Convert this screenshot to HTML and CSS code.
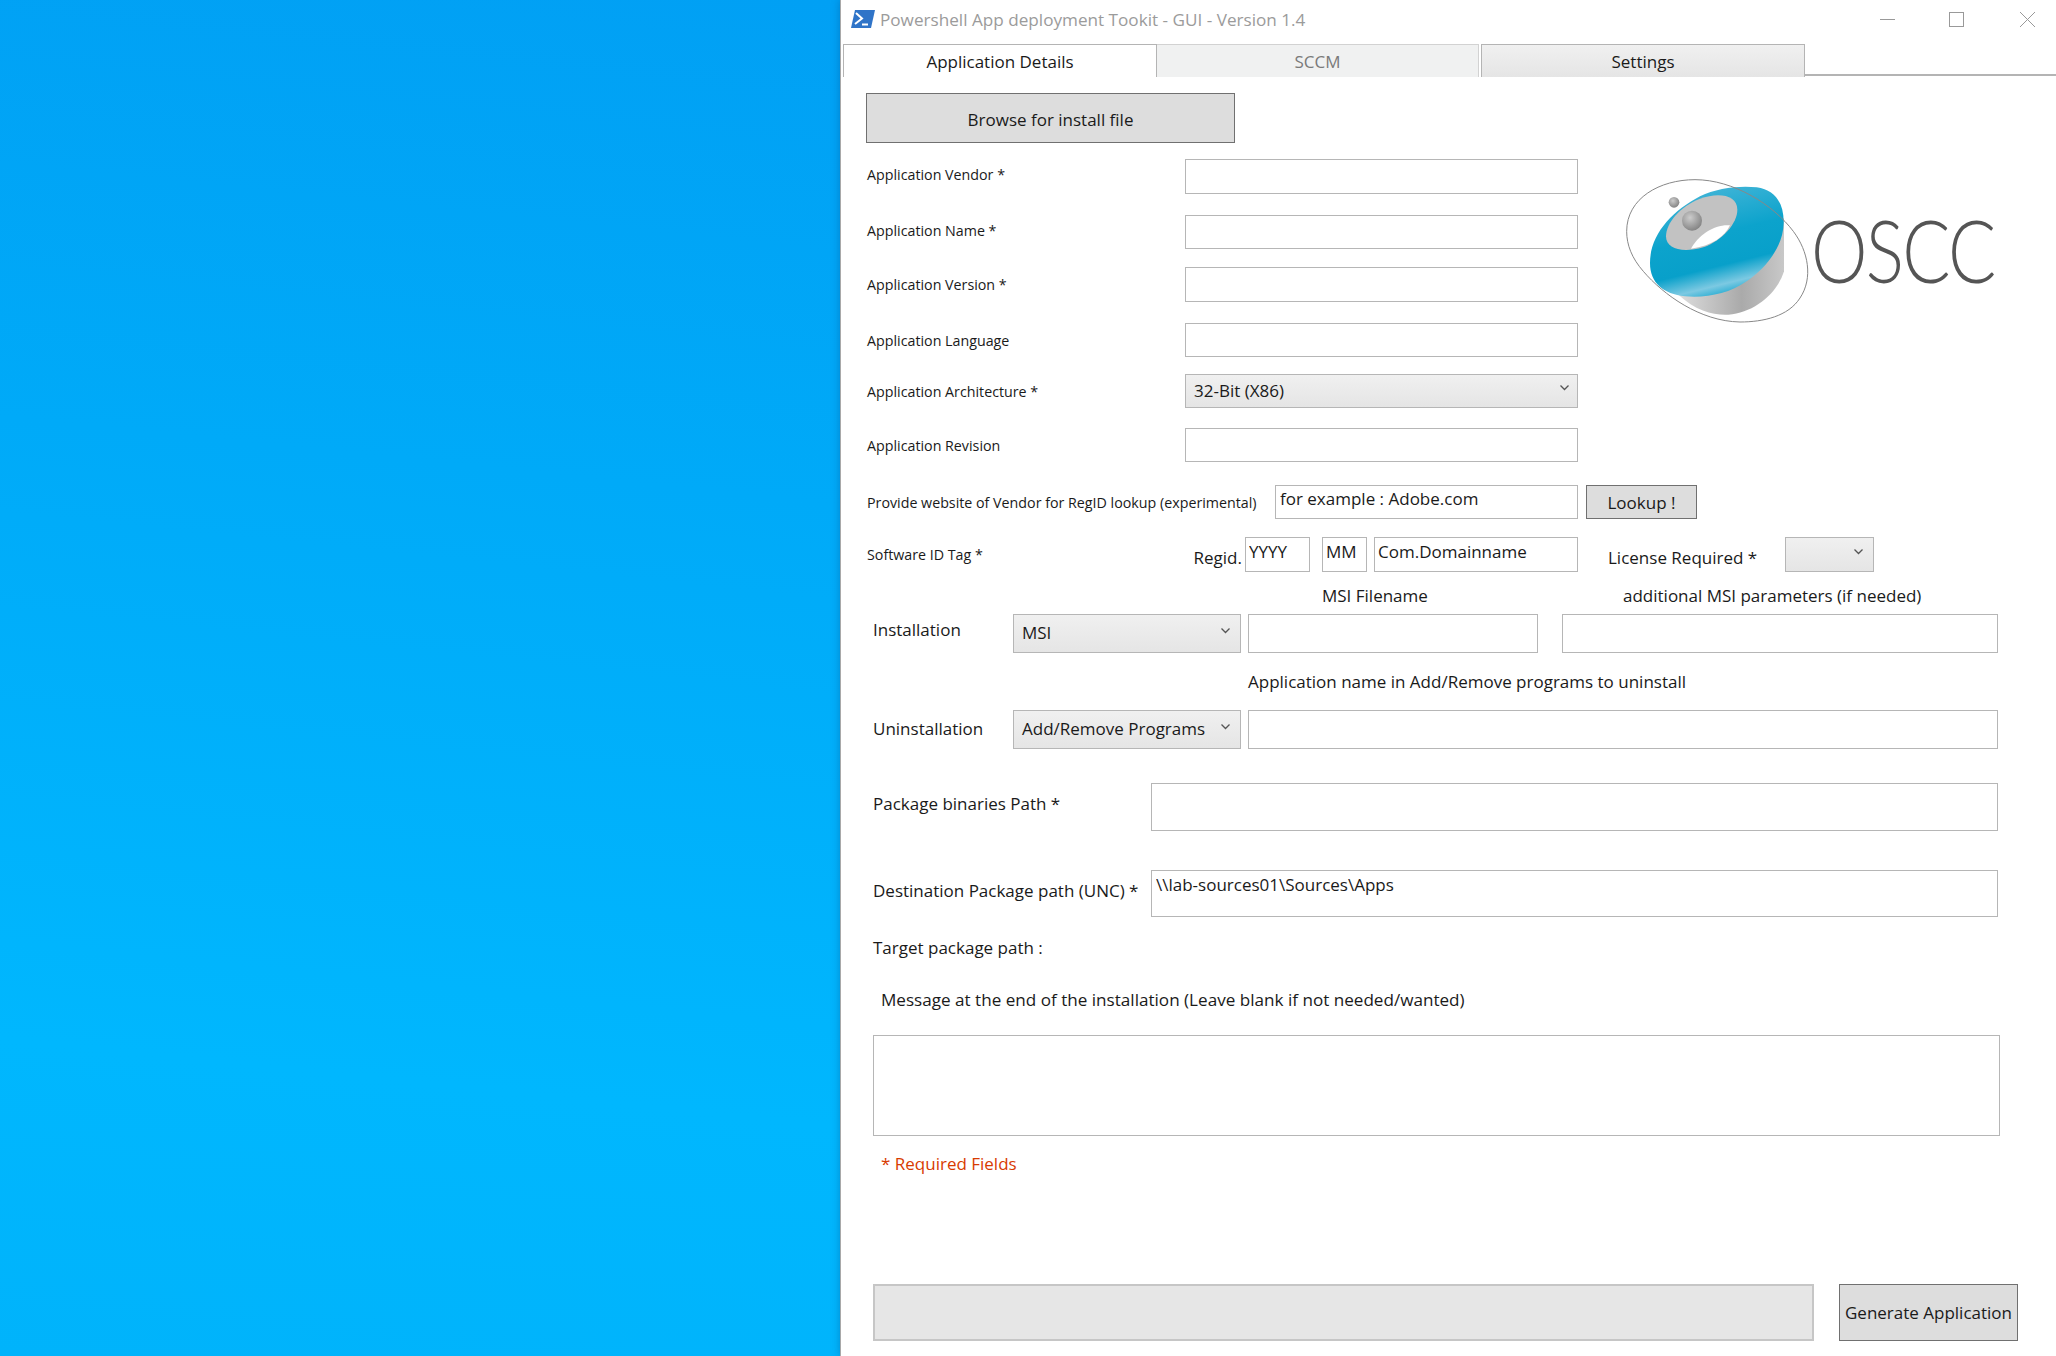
FILE: index.html
```html
<!DOCTYPE html>
<html lang="en">
  <head>
    <meta charset="UTF-8" />
    <title>Powershell App deployment Tookit - GUI</title>
    <link rel="stylesheet" href="styles.css">
  </head>
  <body>
    <div class="desktop"></div>

    <div class="window">
      <div class="titlebar">
        <svg class="app-icon" width="24" height="18" viewBox="0 0 24 18">
          <path d="M4 0H24L20 18H0Z" fill="#2f74c8"/>
          <path d="M5 3L11 8.5L4 14" fill="none" stroke="#fff" stroke-width="2"/>
          <path d="M11 14.500H17" stroke="#fff" stroke-width="2"/>
        </svg>
        <span class="title">Powershell App deployment Tookit - GUI - Version 1.4</span>
        <div class="controls">
          <svg width="15" height="15" viewBox="0 0 15 15"><path d="M0 7.500H15" stroke="#999"/></svg>
          <svg width="15" height="15" viewBox="0 0 15 15"><rect x=".5" y=".5" width="14" height="14" fill="none" stroke="#999"/></svg>
          <svg class="close" width="15" height="15" viewBox="0 0 15 15"><path d="M0 0L15 15M15 0L0 15" stroke="#999"/></svg>
        </div>
      </div>

      <div class="tabs">
        <div class="tab tab-active">Application Details</div>
        <div class="tab tab-off">SCCM</div>
        <div class="tab tab-settings">Settings</div>
        <div class="tabs-rest"></div>
      </div>

      <div class="panel">
        <div class="top">
          <div class="top-form">
            <button class="btn btn-browse">Browse for install file</button>
            <div class="row row-vendor"><label class="small label-top">Application Vendor *</label><input class="field-top" type="text"></div>
            <div class="row row-name"><label class="small label-top">Application Name *</label><input class="field-top" type="text"></div>
            <div class="row row-version"><label class="small label-top">Application Version *</label><input class="field-top" type="text"></div>
            <div class="row row-language"><label class="small label-top">Application Language</label><input class="field-top" type="text"></div>
            <div class="row row-arch">
              <label class="small label-top">Application Architecture *</label>
              <div class="combo field-top"><span>32-Bit (X86)</span><svg class="chev" width="9" height="6" viewBox="0 0 9 6"><path d="M.5 .5L4.500 4.500L8.500 .5" fill="none" stroke="#555" stroke-width="1.300"/></svg></div>
            </div>
            <div class="row row-revision"><label class="small label-top">Application Revision</label><input class="field-top" type="text"></div>
          </div>
          <svg class="logo" width="187" height="145" viewBox="78 530 561 435">
            <defs>
              <linearGradient id="ring" x1="0.3" y1="0" x2="0.6" y2="1">
                <stop offset="0" stop-color="#46b6d8"/>
                <stop offset=".45" stop-color="#0ca3cc"/>
                <stop offset=".72" stop-color="#08a0ca"/>
                <stop offset=".88" stop-color="#7cc9e2"/>
                <stop offset="1" stop-color="#0ea4cd"/>
              </linearGradient>
              <linearGradient id="body" x1="0" y1="0" x2="1" y2="0">
                <stop offset="0" stop-color="#ddd"/>
                <stop offset=".6" stop-color="#aaa"/>
                <stop offset="1" stop-color="#c8c8c8"/>
              </linearGradient>
              <radialGradient id="ball" cx=".4" cy=".35" r=".7">
                <stop offset="0" stop-color="#ccc"/>
                <stop offset="1" stop-color="#808080"/>
              </radialGradient>
            </defs>
            <path d="M235 880C290 930 340 942 385 940C460 935 530 880 552 810V650L300 800Z" fill="url(#body)"/>
            <path d="M150 785C150 700 215 630 300 585C350 560 420 552 470 558C525 566 552 605 551 665C550 730 505 795 440 840C385 878 320 890 255 885C190 878 150 845 150 785Z" fill="url(#ring)"/>
            <path d="M198 705C198 665 240 615 300 592C355 572 412 580 412 625C412 665 370 715 310 738C250 755 198 745 198 705Z" fill="#c2c2c2"/>
            <path d="M273 742C295 700 345 668 390 672C375 705 335 735 273 742Z" fill="#fff"/>
            <circle cx="222" cy="603" r="16" fill="url(#ball)"/>
            <circle cx="276" cy="658" r="30" fill="url(#ball)"/>
            <path d="M80 690C80 590 180 535 285 535C400 535 520 610 580 690C625 750 640 830 600 890C565 945 490 962 420 962C300 960 190 880 130 810C95 770 80 730 80 690Z" fill="none" stroke="#888" stroke-width="3"/>
          </svg>
          <div class="logo-word">OSCC</div>
        </div>

        <div class="row row-website">
          <label class="small label-website">Provide website of Vendor for RegID lookup (experimental)</label>
          <input class="field-website field-text" type="text" value="for example : Adobe.com">
          <button class="btn btn-lookup">Lookup !</button>
        </div>

        <div class="row row-software">
          <label class="small label-top">Software ID Tag *</label>
          <span class="label-regid">Regid.</span>
          <input class="field-yyyy field-text" type="text" value="YYYY">
          <input class="field-mm field-text" type="text" value="MM">
          <input class="field-domain field-text" type="text" value="Com.Domainname">
          <span class="label-license">License Required *</span>
          <div class="combo combo-license"><svg class="chev" width="9" height="6" viewBox="0 0 9 6"><path d="M.5 .5L4.500 4.500L8.500 .5" fill="none" stroke="#555" stroke-width="1.300"/></svg></div>
        </div>

        <div class="captions">
          <span class="caption-msi">MSI Filename</span>
          <span>additional MSI parameters (if needed)</span>
        </div>

        <div class="lower">
          <div class="row">
            <label class="label-setup label-install">Installation</label>
            <div class="combo combo-setup"><span>MSI</span><svg class="chev" width="9" height="6" viewBox="0 0 9 6"><path d="M.5 .5L4.500 4.500L8.500 .5" fill="none" stroke="#555" stroke-width="1.300"/></svg></div>
            <input class="field-msi" type="text">
            <input class="field-params" type="text">
          </div>
          <div class="caption-remove">Application name in Add/Remove programs to uninstall</div>
          <div class="row">
            <label class="label-setup label-uninstall">Uninstallation</label>
            <div class="combo combo-setup"><span>Add/Remove Programs</span><svg class="chev" width="9" height="6" viewBox="0 0 9 6"><path d="M.5 .5L4.500 4.500L8.500 .5" fill="none" stroke="#555" stroke-width="1.300"/></svg></div>
            <input class="field-remove" type="text">
          </div>
          <div class="row row-package">
            <label class="label-path">Package binaries Path *</label>
            <input class="field-path" type="text">
          </div>
          <div class="row row-dest">
            <label class="label-path">Destination Package path (UNC) *</label>
            <input class="field-path field-text-top" type="text" value="\\lab-sources01\Sources\Apps">
          </div>
          <div class="target">Target package path :</div>
          <div class="message-label">Message at the end of the installation (Leave blank if not needed/wanted)</div>
          <textarea class="message"></textarea>
          <div class="required">* Required Fields</div>
          <div class="row row-bottom">
            <div class="progress"></div>
            <button class="btn btn-generate">Generate Application</button>
          </div>
        </div>
      </div>
    </div>
  </body>
</html>
```

FILE: styles.css
```css
* {
  box-sizing: border-box;
  margin: 0;
  padding: 0;
  outline: 0;
  font-family: "Open Sans", "Noto Sans", sans-serif;
}

html, body {
  height: 100%;
  overflow: hidden;
}

body {
  display: flex;
  background-color: #fff;
  color: #1a1a1a;
  font-size: 17px;
}

.desktop {
  width: 840px;
  background: linear-gradient(186deg, #01a0f4 0%, #00aaf8 35%, #00b7fe 78%, #00b3fb 100%);
}

.window {
  flex: 1;
  display: flex;
  flex-direction: column;
  background-color: #fff;
  border-left: 1px solid #a8a8a8;
  box-shadow: 0 0 8px rgba(0, 60, 120, .35);
}

/* title bar */
.titlebar {
  height: 44px;
  display: flex;
  align-items: center;
  padding-left: 10px;
  padding-bottom: 6px;
}

.title {
  margin-left: 5px;
  color: #9b9b9b;
  font-size: 17.150px;
}

.controls {
  margin-left: auto;
  display: flex;
  gap: 54px;
  padding-right: 21px;
}

.controls .close {
  margin-left: 2px;
}

/* tabs */
.tabs {
  height: 33px;
  display: flex;
  padding-left: 2px;
}

.tab {
  display: flex;
  align-items: center;
  justify-content: center;
  border: 1px solid #b4b4b4;
  border-bottom: 0;
  font-size: 17px;
}

.tab-active {
  width: 314px;
  background-color: #fff;
}

.tab-off {
  width: 322px;
  background-color: #f0f1f1;
  border-left: 0;
  color: #7a7a7a;
  margin-right: 2px;
  border-color: #d2d2d2;
}

.tab-settings {
  width: 324px;
  background: linear-gradient(#f0f0f0, #e5e5e5);
}

.tabs-rest {
  flex: 1;
  height: 32px;
  border-bottom: 2px solid #b4b4b4;
}

/* tab page */
.panel {
  flex: 1;
  padding: 16px 0 0 25px;
}

.top {
  display: flex;
}

.top-form {
  width: 712px;
}

.logo {
  margin: 85px 0 0 48px;
}

.logo-word {
  margin: 117px 0 0 0;
  height: 80px;
  width: 0;
  transform: translateX(-2px) scaleX(.83);
  transform-origin: left;
  font-family: "Lato", sans-serif;
  font-weight: 300;
  font-size: 86px;
  line-height: 80px;
  letter-spacing: -2px;
  color: #555;
}

.row {
  display: flex;
  align-items: center;
}

.row-vendor { margin-top: 16px; height: 35px; }
.row-name { margin-top: 21px; height: 34px; }
.row-version { margin-top: 18px; height: 35px; }
.row-language { margin-top: 21px; height: 34px; }
.row-arch { margin-top: 17px; height: 34px; }
.row-revision { margin-top: 20px; height: 34px; }
.row-website { margin-top: 23px; height: 34px; }
.row-software { margin-top: 18px; height: 35px; }

.small {
  font-size: 14.250px;
  padding-left: 1px;
}

.row-vendor .small { padding-bottom: 4px; }
.row-name .small { padding-bottom: 3px; }

.label-top {
  width: 319px;
  flex-shrink: 0;
}

.label-website {
  width: 409px;
}

input, textarea, .combo {
  height: 100%;
  border: 1.5px solid #b6b6b6;
  background-color: #fff;
  color: #1a1a1a;
  font-size: 17px;
}

input {
  padding: 0 4px;
}

.field-top {
  width: 393px;
}

.combo {
  display: flex;
  align-items: center;
  padding: 0 7px 0 8px;
  background: linear-gradient(#f0f0f0, #e5e5e5);
}

.combo span {
  padding-bottom: 2px;
}

.chev {
  margin-left: auto;
  margin-right: 1px;
  margin-bottom: 6px;
}

.btn {
  border: 1.5px solid #707070;
  background-color: #dddddd;
  color: #1a1a1a;
  font-size: 17px;
}

.btn-browse {
  display: block;
  width: 369px;
  height: 50px;
  padding-top: 2px;
}

.field-text {
  padding-bottom: 7px;
}

.field-website { width: 303px; }
.btn-lookup { width: 111px; height: 34px; margin-left: 8px; }

.label-regid {
  width: 60px;
  text-align: right;
  padding: 5px 3px 0 0;
}

.field-yyyy { width: 65px; padding-left: 3px; }
.field-mm { width: 45px; margin-left: 12px; padding-left: 3px; }
.field-domain { width: 204px; margin-left: 7px; padding-left: 3px; }

.label-license {
  width: 177px;
  height: 23px;
  line-height: 24px;
  margin: 5px 0 0 30px;
  overflow: hidden;
}

.combo-license {
  width: 89px;
}

.combo-license .chev {
  margin-right: 3px;
}

.captions {
  display: flex;
  padding: 12px 0 6px 456px;
  line-height: 24px;
}

.caption-msi {
  width: 301px;
}

/* lower half, sits 7px further in */
.lower {
  padding-left: 7px;
}

.lower .row {
  height: 39px;
}

.label-setup {
  width: 140px;
}

.label-install { padding-bottom: 8px; }
.label-uninstall { padding-bottom: 3px; }

.combo-setup {
  width: 228px;
}

.combo-setup span {
  white-space: nowrap;
}

.combo-setup .chev {
  margin-right: 3px;
}

.field-msi { width: 290px; margin-left: 7px; }
.field-params { width: 436px; margin-left: 24px; }
.field-remove { width: 750px; margin-left: 7px; }

.caption-remove {
  height: 57px;
  line-height: 24px;
  padding: 17px 0 0 375px;
}

.lower .row-package { margin-top: 34px; height: 48px; }
.lower .row-dest { margin-top: 39px; height: 47px; }

.label-path {
  width: 278px;
  padding-bottom: 7px;
  white-space: nowrap;
}

.field-path {
  width: 847px;
}

.field-text-top {
  padding-bottom: 18px;
}

.target {
  margin-top: 19px;
  line-height: 24px;
}

.message-label {
  margin-top: 28px;
  padding-left: 8px;
  line-height: 24px;
  font-size: 17.100px;
}

.message {
  display: block;
  margin-top: 23px;
  width: 1127px;
  height: 101px;
  resize: none;
}

.required {
  margin-top: 16px;
  padding-left: 8px;
  line-height: 24px;
  color: #d83b01;
}

.lower .row-bottom {
  margin-top: 108px;
  height: 57px;
}

.progress {
  width: 941px;
  height: 100%;
  border: 2px solid #c6c6c6;
  background-color: #e6e6e6;
}

.btn-generate {
  width: 179px;
  height: 100%;
  margin-left: 25px;
  white-space: nowrap;
}
```
